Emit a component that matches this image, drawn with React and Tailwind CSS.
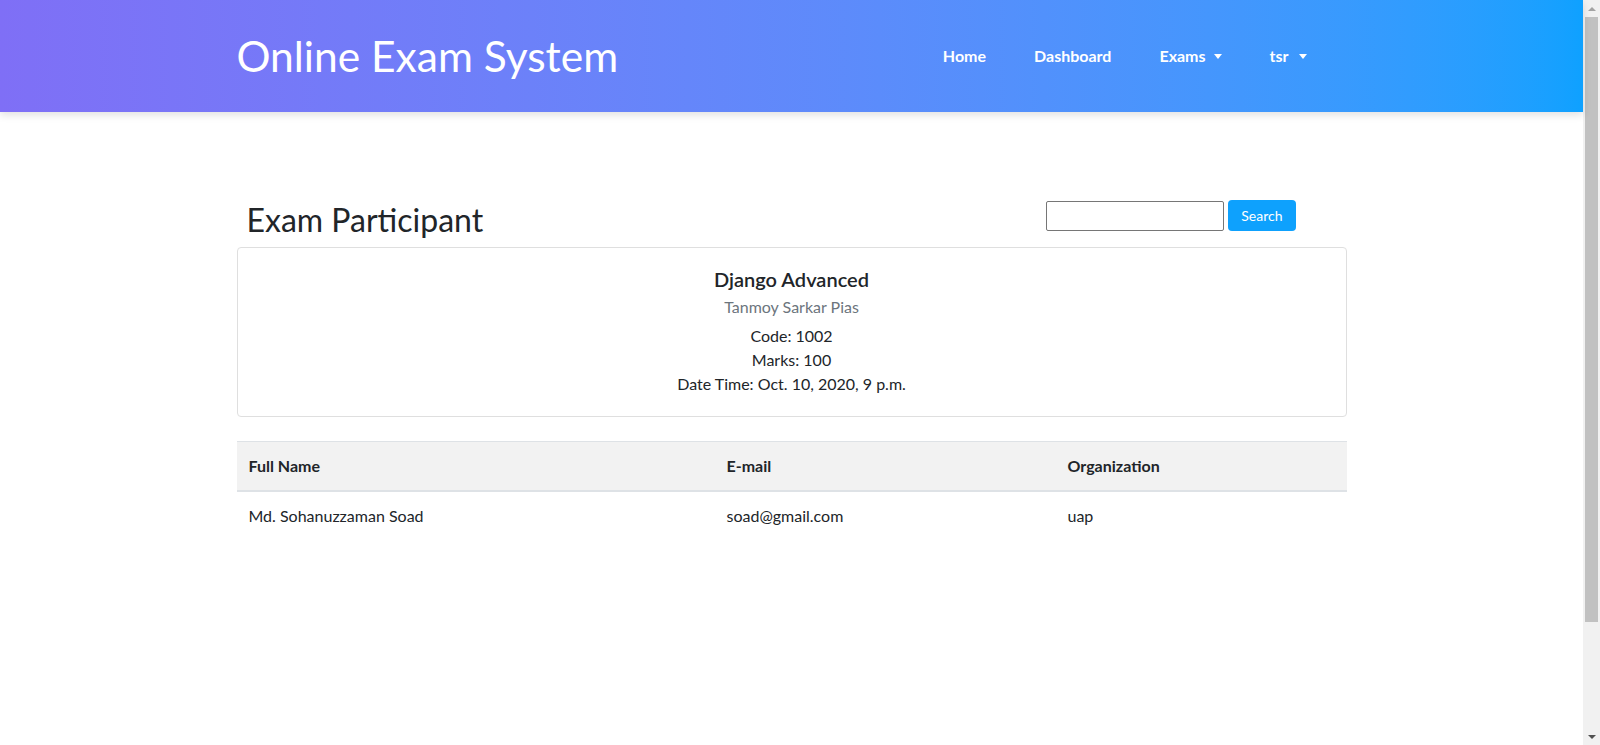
import { useState } from 'react';

const participants = [
    { name: 'Md. Sohanuzzaman Soad', email: 'soad@gmail.com', org: 'uap' },
];

function Caret({ gap }) {
    return (
        <span
            className={`inline-block h-0 w-0 border-x-[4px] border-t-[5px] border-x-transparent border-t-white align-[3px] ${gap}`}
        />
    );
}

function NavLink({ children, caretGap }) {
    return (
        <a href="#" className="px-6 text-[16px] font-bold text-white">
            {children}
            {caretGap && <Caret gap={caretGap} />}
        </a>
    );
}

// the reference was captured with a classic browser scrollbar showing
function Scrollbar() {
    return (
        <aside className="flex w-[17px] shrink-0 flex-col bg-[#f1f1f1]">
            <div className="flex h-[17px] items-center justify-center">
                <span className="h-0 w-0 border-x-[4px] border-b-[4px] border-x-transparent border-b-[#a3a3a3]" />
            </div>
            <div className="mx-[2px] h-[605px] bg-[#c1c1c1]" />
            <div className="flex-1" />
            <div className="flex h-[17px] items-center justify-center">
                <span className="h-0 w-0 border-x-[4px] border-t-[4px] border-x-transparent border-t-[#505050]" />
            </div>
        </aside>
    );
}

export default function App() {
    const [query, setQuery] = useState('');

    return (
        <div className="flex h-[745px] overflow-hidden bg-white font-['Lato',sans-serif] text-[#212529]">
            <div className="min-w-0 flex-1">
                <header className="relative bg-gradient-to-r from-[#7f6ff6] to-[#0ea1ff] shadow-[0_3px_8px_rgba(0,0,0,0.12)]">
                    <div className="mx-auto flex h-[112px] w-[1110px] items-center justify-between">
                        <h1 className="text-[42.5px] leading-none text-white">Online Exam System</h1>
                        <nav className="mr-[16px] flex items-center">
                            <NavLink>Home</NavLink>
                            <NavLink>Dashboard</NavLink>
                            <NavLink caretGap="ml-[8px]">Exams</NavLink>
                            <NavLink caretGap="ml-[10px]">tsr</NavLink>
                        </nav>
                    </div>
                </header>

                <main className="mx-auto w-[1110px] pt-[87px]">
                    <div className="flex items-start justify-between pl-[10px] pr-[51px]">
                        <h2 className="mt-[2px] text-[32px] leading-[38px]">Exam Participant</h2>
                        <form className="mt-px flex items-center gap-[4px]" onSubmit={(e) => e.preventDefault()}>
                            <input
                                type="text"
                                value={query}
                                onChange={(e) => setQuery(e.target.value)}
                                className="h-[30px] w-[178px] rounded-[2px] border border-[#767676] px-1 text-sm"
                            />
                            <button
                                type="submit"
                                className="h-[31px] rounded-[4px] bg-[#0ea1fd] px-[13px] text-[14px] text-white"
                            >
                                Search
                            </button>
                        </form>
                    </div>

                    <div className="mt-[8px] rounded-[4px] border border-[#dfdfdf] px-5 pt-[19px] pb-5 text-center">
                        <h5 className="mb-[4px] text-[20px] leading-[24px] font-semibold">Django Advanced</h5>
                        <h6 className="text-[16px] leading-[24px] text-[#6c757d]">Tanmoy Sarkar Pias</h6>
                        <div className="mt-[5px] text-[16px] leading-[24px]">
                            <p>Code: 1002</p>
                            <p>Marks: 100</p>
                            <p>Date Time: Oct. 10, 2020, 9 p.m.</p>
                        </div>
                    </div>

                    <table className="mt-[24px] w-full text-left text-[16px] leading-[24px]">
                        <thead>
                            <tr className="bg-[#f2f2f2]">
                                <th className="w-[478px] border-t border-b-2 border-[#dee2e6] p-3 font-bold">Full Name</th>
                                <th className="w-[341px] border-t border-b-2 border-[#dee2e6] p-3 font-bold">E-mail</th>
                                <th className="border-t border-b-2 border-[#dee2e6] p-3 font-bold">Organization</th>
                            </tr>
                        </thead>
                        <tbody>
                            {participants.map((p) => (
                                <tr key={p.email}>
                                    <td className="p-3">{p.name}</td>
                                    <td className="p-3">{p.email}</td>
                                    <td className="p-3">{p.org}</td>
                                </tr>
                            ))}
                        </tbody>
                    </table>
                </main>
            </div>
            <Scrollbar />
        </div>
    );
}
